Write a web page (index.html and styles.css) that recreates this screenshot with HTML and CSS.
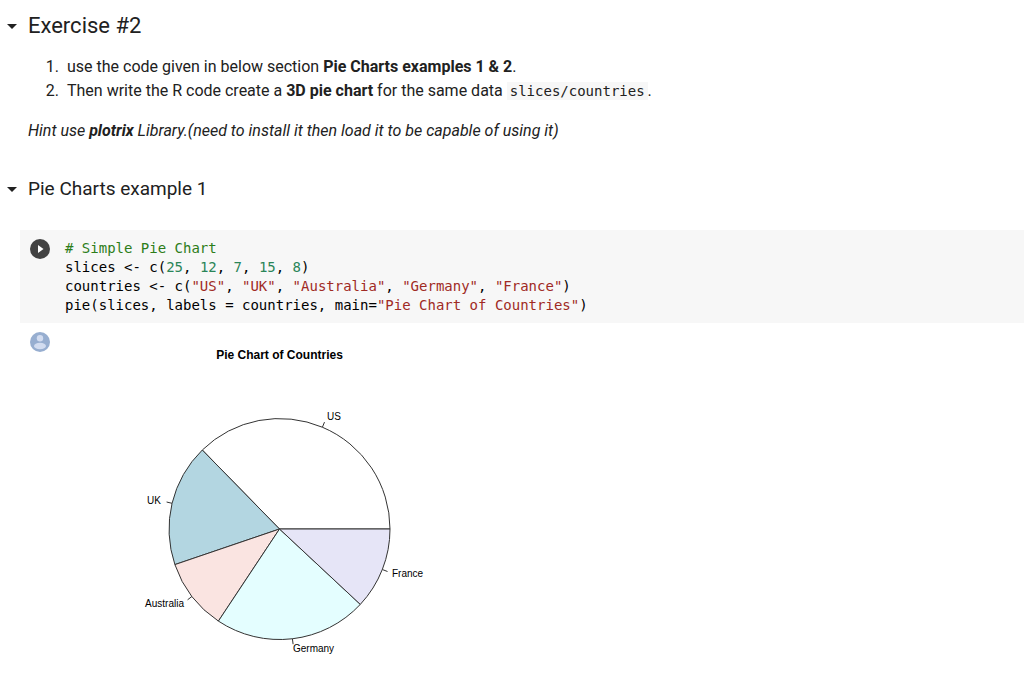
FILE: index.html
```html
<!DOCTYPE html>
<html lang="en">
<head>
  <meta charset="UTF-8" />
  <title>Pie Charts</title>
  <link rel="stylesheet" href="styles.css">
</head>
<body>
  <main class="notebook">
    <section class="text-cell">
      <div class="heading-row">
        <button class="toggle" aria-label="Collapse section">
          <svg width="10" height="5" viewBox="0 0 10 5"><path d="M0 0h10L5 5z" fill="currentColor"/></svg>
        </button>
        <h2>Exercise #2</h2>
      </div>
      <div class="markdown">
        <ol>
          <li>use the code given in below section <strong>Pie Charts examples 1 &amp; 2</strong>.</li>
          <li>Then write the R code create a <strong>3D pie chart</strong> for the same data <code>slices/countries</code>.</li>
        </ol>
        <p><em>Hint use <strong>plotrix</strong> Library.(need to install it then load it to be capable of using it)</em></p>
      </div>
    </section>

    <section class="text-cell">
      <div class="heading-row">
        <button class="toggle" aria-label="Collapse section">
          <svg width="10" height="5" viewBox="0 0 10 5"><path d="M0 0h10L5 5z" fill="currentColor"/></svg>
        </button>
        <h3>Pie Charts example 1</h3>
      </div>
    </section>

    <section class="code-cell">
      <div class="editor">
        <button class="run" aria-label="Run cell">
          <svg width="20" height="20" viewBox="0 0 20 20">
            <circle cx="10" cy="10" r="10" fill="#424242"/>
            <path d="M8 6v8l5.500-4z" fill="#fff"/>
          </svg>
        </button>
        <pre class="source"><span class="line"><span class="comment"># Simple Pie Chart</span></span><span class="line">slices &lt;- c(<span class="number">25</span>, <span class="number">12</span>, <span class="number">7</span>, <span class="number">15</span>, <span class="number">8</span>)</span><span class="line">countries &lt;- c(<span class="string">"US"</span>, <span class="string">"UK"</span>, <span class="string">"Australia"</span>, <span class="string">"Germany"</span>, <span class="string">"France"</span>)</span><span class="line">pie(slices, labels = countries, main=<span class="string">"Pie Chart of Countries"</span>)</span></pre>
      </div>
      <div class="output">
        <svg class="avatar" width="20" height="20" viewBox="0 0 20 20">
          <circle cx="10" cy="10" r="10" fill="#97aed0"/>
          <circle cx="10" cy="6.300" r="3.200" fill="#d2dcf0"/>
          <ellipse cx="10" cy="14" rx="6" ry="3.200" fill="#d2dcf0"/>
        </svg>
        <svg class="chart" width="430" height="340" viewBox="0 0 430 340" role="img" aria-label="Pie Chart of Countries">
          <text class="chart-title" x="214.500" y="27">Pie Chart of Countries</text>
          <g class="slices">
            <path fill="#fff" d="M214.500 197H325A110.500 110.500 0 0 0 137.300 118z"/>
            <path fill="#b3d6e1" d="M214.500 197L137.300 118A110.500 110.500 0 0 0 109.900 232.600z"/>
            <path fill="#fae4e1" d="M214.500 197L109.900 232.600A110.500 110.500 0 0 0 153.400 289.100z"/>
            <path fill="#e4feff" d="M214.500 197L153.400 289.100A110.500 110.500 0 0 0 295.300 272.400z"/>
            <path fill="#e6e5f7" d="M214.500 197L295.300 272.400A110.500 110.500 0 0 0 325 197z"/>
            <path class="ticks" d="M257.400 95.200l2.100-5.100M107 171.300l-5.400-1.300M127 264.400l-4.400 3.400M227.400 306.700l.7 5.500M317.300 237.500l5.200 2"/>
          </g>
          <g class="labels">
            <text x="262" y="88">US</text>
            <text x="96" y="172" text-anchor="end">UK</text>
            <text x="119" y="275" text-anchor="end">Australia</text>
            <text x="228" y="320">Germany</text>
            <text x="327" y="245">France</text>
          </g>
        </svg>
      </div>
    </section>
  </main>
</body>
</html>
```
FILE: styles.css
```css
body {
  margin: 0;
  background: #fff;
  color: #212121;
  font-family: Roboto, sans-serif;
  font-size: 16px;
  line-height: 24px;
}
button {
  padding: 0;
  border: none;
  background: transparent;
  color: inherit;
  cursor: pointer;
}
.heading-row {
  display: flex;
  align-items: center;
}
.toggle {
  display: flex;
  justify-content: center;
  width: 24px;
  margin-right: 4px;
}
h2,
h3 {
  margin: 0;
  font-weight: 400;
}
h2 {
  font-size: 22px;
  line-height: 52px;
}
h3 {
  font-size: 19px;
  line-height: 40px;
}
.markdown {
  padding: 3px 28px 26px;
}
.markdown ol {
  margin: 0 0 16px;
  padding-left: 39px;
}
.markdown li::marker {
  content: counter(list-item) ".\a0\a0";
}
.markdown p {
  margin: 0;
}
.markdown strong {
  font-weight: 700;
}
.markdown code {
  padding: 1px 3px;
  background: #f7f7f7;
}
code,
.source {
  font-family: "DejaVu Sans Mono", monospace;
  font-size: 14px;
}
.code-cell {
  margin: 21px 0 0 20px;
}
.editor,
.output {
  display: flex;
  align-items: flex-start;
}
.editor {
  padding: 9px 0 8px 10px;
  background: #f7f7f7;
}
.run {
  display: block;
  width: 20px;
  height: 20px;
}
.run svg {
  display: block;
}
.source {
  margin: 0 0 0 15px;
  color: #000;
  line-height: 19px;
}
.line {
  display: block;
}
.comment {
  color: #2d7d19;
}
.number {
  color: #2a8558;
}
.string {
  color: #a02a24;
}
.output {
  gap: 15px;
  padding: 9px 0 0 10px;
}
.avatar {
  flex-shrink: 0;
}
.chart text {
  font-family: "Liberation Sans", sans-serif;
  font-size: 10px;
  fill: #000;
}
.chart .chart-title {
  font-size: 12px;
  font-weight: 700;
  text-anchor: middle;
}
.slices {
  stroke: #333;
  stroke-width: 1px;
  stroke-linejoin: round;
}
.ticks {
  fill: none;
}
```
